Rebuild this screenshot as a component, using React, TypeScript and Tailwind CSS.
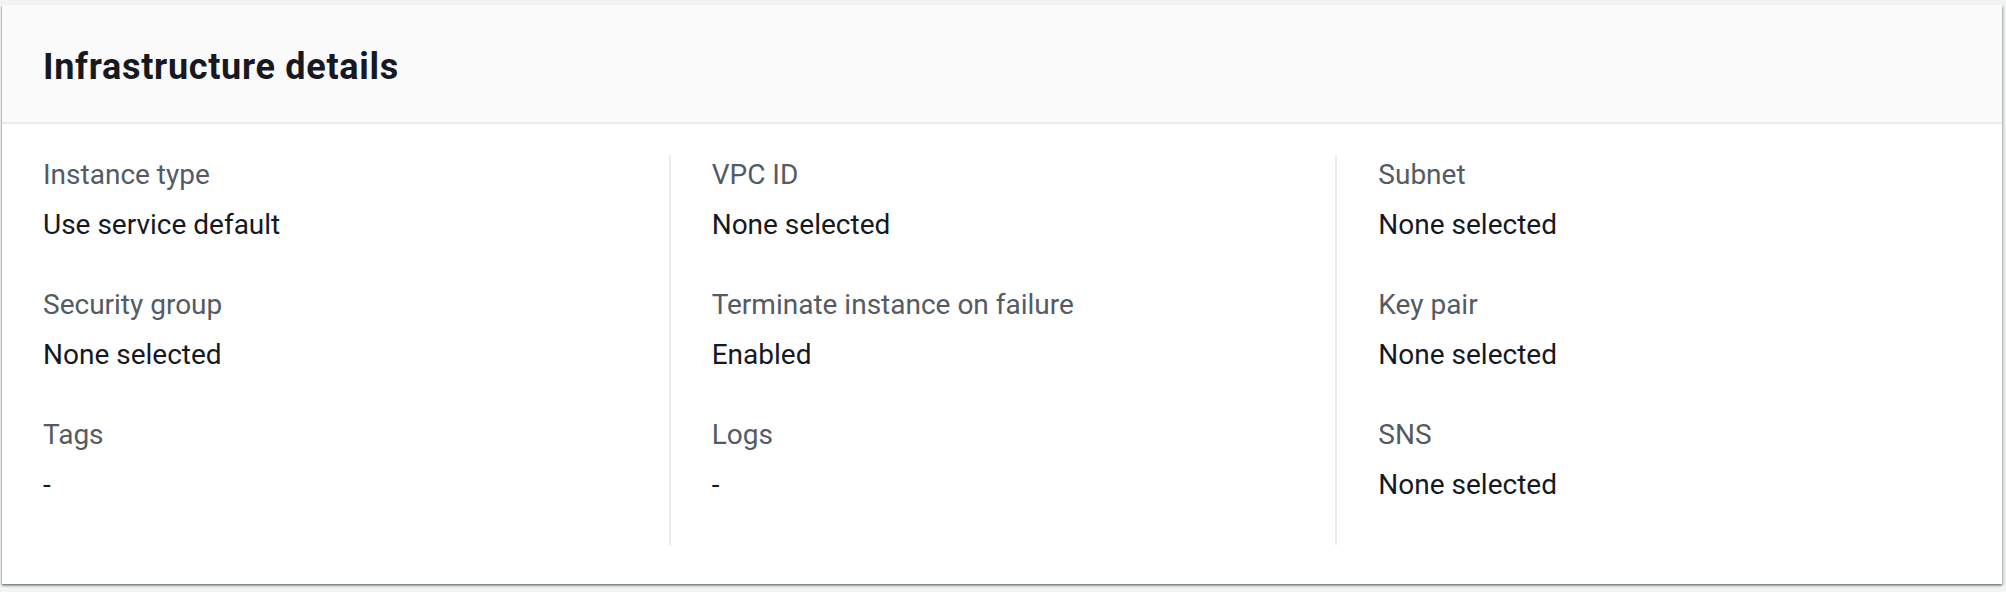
const columns = [
  [
    { label: 'Instance type', value: 'Use service default' },
    { label: 'Security group', value: 'None selected' },
    { label: 'Tags', value: '-' },
  ],
  [
    { label: 'VPC ID', value: 'None selected' },
    { label: 'Terminate instance on failure', value: 'Enabled' },
    { label: 'Logs', value: '-' },
  ],
  [
    { label: 'Subnet', value: 'None selected' },
    { label: 'Key pair', value: 'None selected' },
    { label: 'SNS', value: 'None selected' },
  ],
]

function Field({ label, value }: { label: string; value: string }) {
  return (
    <div className="mb-[40px]">
      <div className="text-[28px] leading-[40px] text-[#545b64]">{label}</div>
      <div className="mt-[10px] text-[28px] leading-[40px] text-[#16191f]">{value}</div>
    </div>
  )
}

export default function App() {
  return (
    <div className="min-h-[592px] bg-[#f2f3f3] pt-[5px] pl-[2px] pr-[4px] pb-[7px] font-['Roboto',sans-serif]">
      <div className="bg-white shadow-[0_2px_2px_0_rgba(0,28,36,0.35),2px_1px_2px_0_rgba(0,28,36,0.15),-1px_1px_1px_0_rgba(0,28,36,0.15)]">
        {/* Header */}
        <div className="bg-[#fafafa] border-b-2 border-[#eaeded] pl-[41px] pt-[40px] pb-[33px]">
          <h2 className="text-[36px] leading-[44px] font-bold text-[#16191f] tracking-[0.7px]">
            Infrastructure details
          </h2>
        </div>

        {/* Body */}
        <div className="grid grid-cols-3 pt-[31px] pb-[39px]">
          {columns.map((col, i) => (
            <div
              key={i}
              className={i === 0 ? 'pl-[41px]' : 'pl-[41px] border-l-2 border-[#eaeded]'}
            >
              {col.map((f) => (
                <Field key={f.label} label={f.label} value={f.value} />
              ))}
            </div>
          ))}
        </div>
      </div>
    </div>
  )
}
